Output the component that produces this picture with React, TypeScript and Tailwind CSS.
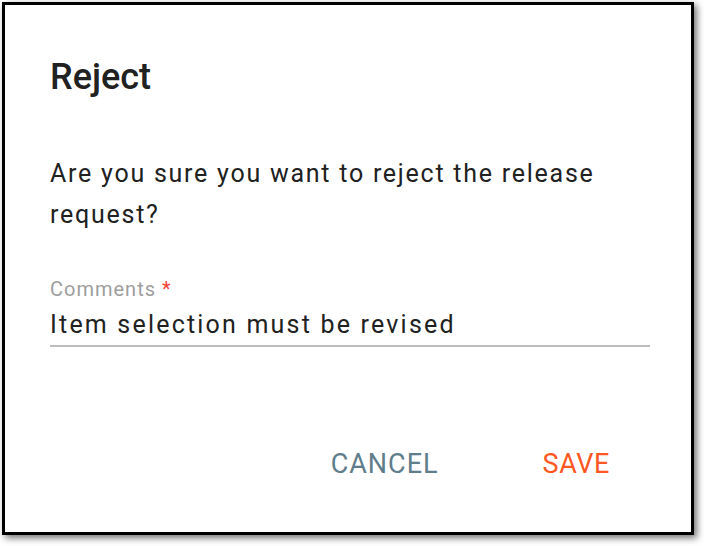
export default function App() {
  return (
    <div className="w-[704px] h-[546px] bg-white pl-[2px] pt-[2px] font-['Roboto',_'Liberation_Sans',_sans-serif]">
      <div className="w-[692px] h-[533px] border-[3px] border-black bg-white shadow-[3px_3px_7px_rgba(0,0,0,0.55)] flex flex-col pl-[45px] pt-[51px]">
        {/* TITLE */}
        <h2 className="text-[36px] leading-[42px] font-medium text-[#212121]">Reject</h2>

        {/* BODY */}
        <p className="mt-[55px] w-[600px] text-[25px] leading-[41px] tracking-[1.75px] text-[#212121]">
          Are you sure you want to reject the release request?
        </p>

        {/* FIELD */}
        <div className="mt-[42px] w-[600px]">
          <label className="block text-[20px] leading-[24px] tracking-[1px] text-[#9e9e9e]">
            Comments <span className="text-[#f44336]">*</span>
          </label>
          <div className="mt-[9px] pb-[5px] border-b-2 border-[#bdbdbd] text-[25px] leading-[30px] tracking-[2.2px] text-[#212121]">
            Item selection must be revised
          </div>
        </div>

        {/* ACTIONS */}
        <div className="mt-auto mb-[50px] pr-[57px] flex justify-end gap-[56px]">
          <button className="px-[24px] text-[27px] leading-[36px] tracking-[1px] uppercase text-[#607d8b]">Cancel</button>
          <button className="px-[24px] text-[27px] leading-[36px] tracking-[0.6px] uppercase text-[#ff5722]">Save</button>
        </div>
      </div>
    </div>
  );
}
